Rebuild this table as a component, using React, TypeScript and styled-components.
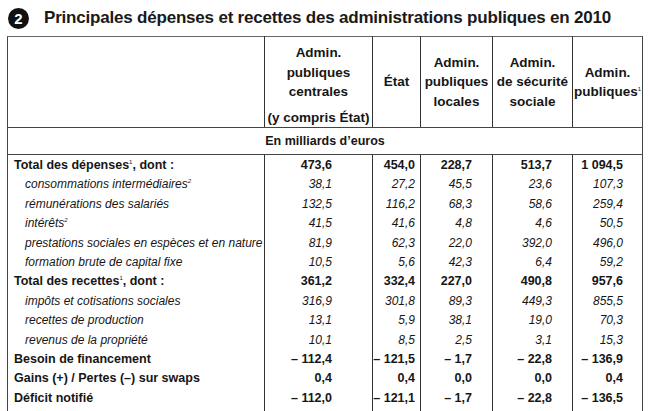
import styled, { createGlobalStyle } from 'styled-components';

const GlobalStyle = createGlobalStyle`
  body {
    margin: 0;
    background: #fff;
    font-family: 'Liberation Sans', Arial, sans-serif;
    color: #161616;
  }
`;

type Kind = 'total' | 'sub';

interface Row {
    label: string;
    sup?: string;
    suffix?: string;
    kind: Kind;
    values: string[];
}

const M = '\u2013\u00a0';

const rows: Row[] = [
    { label: 'Total des dépenses', sup: '1', suffix: ', dont :', kind: 'total', values: ['473,6', '454,0', '228,7', '513,7', '1\u00a0094,5'] },
    { label: 'consommations intermédiaires', sup: '2', kind: 'sub', values: ['38,1', '27,2', '45,5', '23,6', '107,3'] },
    { label: 'rémunérations des salariés', kind: 'sub', values: ['132,5', '116,2', '68,3', '58,6', '259,4'] },
    { label: 'intérêts', sup: '2', kind: 'sub', values: ['41,5', '41,6', '4,8', '4,6', '50,5'] },
    { label: 'prestations sociales en espèces et en nature', kind: 'sub', values: ['81,9', '62,3', '22,0', '392,0', '496,0'] },
    { label: 'formation brute de capital fixe', kind: 'sub', values: ['10,5', '5,6', '42,3', '6,4', '59,2'] },
    { label: 'Total des recettes', sup: '1', suffix: ', dont :', kind: 'total', values: ['361,2', '332,4', '227,0', '490,8', '957,6'] },
    { label: 'impôts et cotisations sociales', kind: 'sub', values: ['316,9', '301,8', '89,3', '449,3', '855,5'] },
    { label: 'recettes de production', kind: 'sub', values: ['13,1', '5,9', '38,1', '19,0', '70,3'] },
    { label: 'revenus de la propriété', kind: 'sub', values: ['10,1', '8,5', '2,5', '3,1', '15,3'] },
    { label: 'Besoin de financement', kind: 'total', values: [M + '112,4', M + '121,5', M + '1,7', M + '22,8', M + '136,9'] },
    { label: 'Gains (+) / Pertes (–) sur swaps', kind: 'total', values: ['0,4', '0,4', '0,0', '0,0', '0,4'] },
    { label: 'Déficit notifié', kind: 'total', values: [M + '112,0', M + '121,1', M + '1,7', M + '22,8', M + '136,5'] },
];

// largeur des colonnes et marge droite des chiffres
const widths = [257, 108, 48, 72, 80, 70];
const pads = [40, 5, 20, 20, 19];

function App() {
    return (
        <>
            <GlobalStyle />
            <Page>
                <TitleRow>
                    <Badge>2</Badge>
                    <Title>Principales dépenses et recettes des administrations publiques en 2010</Title>
                </TitleRow>

                <Table>
                    <colgroup>
                        {widths.map((w, i) => (
                            <Col key={i} w={w} />
                        ))}
                    </colgroup>
                    <thead>
                        <tr>
                            <HeadCell />
                            <HeadCell>
                                <HeadStack>
                                    <span>Admin.</span>
                                    <span>publiques</span>
                                    <span>centrales</span>
                                    <Note>(y compris État)</Note>
                                </HeadStack>
                            </HeadCell>
                            <HeadCell>État</HeadCell>
                            <HeadCell>
                                Admin.
                                <br />
                                publiques
                                <br />
                                locales
                            </HeadCell>
                            <HeadCell>
                                Admin.
                                <br />
                                de sécurité
                                <br />
                                sociale
                            </HeadCell>
                            <HeadCell>
                                Admin.
                                <br />
                                publiques<Sup>1</Sup>
                            </HeadCell>
                        </tr>
                        <tr>
                            <UnitCell colSpan={6}>En milliards d’euros</UnitCell>
                        </tr>
                    </thead>
                    <tbody>
                        {rows.map((r, i) => (
                            <tr key={i}>
                                <Label kind={r.kind} first={i === 0} last={i === rows.length - 1}>
                                    {r.label}
                                    {r.sup && <Sup>{r.sup}</Sup>}
                                    {r.suffix}
                                </Label>
                                {r.values.map((v, j) => (
                                    <Value key={j} kind={r.kind} pr={pads[j]} first={i === 0} last={i === rows.length - 1}>
                                        {v}
                                    </Value>
                                ))}
                            </tr>
                        ))}
                    </tbody>
                </Table>
            </Page>
        </>
    );
}

export default App;

const Page = styled.div`
    width: 650px;
    height: 411px;
    overflow: hidden;
`;

const TitleRow = styled.div`
    display: flex;
    align-items: center;
    height: 36px;
    padding-left: 8px;
    gap: 15px;
`;

const Badge = styled.span`
    display: flex;
    align-items: center;
    justify-content: center;
    width: 21px;
    height: 21px;
    border-radius: 50%;
    background: #111;
    color: #fff;
    font-size: 15px;
    font-weight: bold;
`;

const Title = styled.h1`
    margin: 0;
    font-size: 17px;
    font-weight: bold;
    letter-spacing: -0.2px;
    color: #1a1a1a;
`;

const Table = styled.table`
    margin-left: 7px;
    width: 635px;
    border-collapse: collapse;
    table-layout: fixed;
    border-top: 1px solid #666;
    border-left: 1px solid #444;
    border-right: 1px solid #444;
    border-bottom: 2px solid #333;
`;

const Col = styled.col<{ w: number }>`
    width: ${(props) => props.w}px;
`;

const HeadCell = styled.th`
    height: 88px;
    padding: 0;
    border-left: 1px solid #333;
    border-bottom: 1px solid #444;
    text-align: center;
    vertical-align: middle;
    font-size: 13.5px;
    font-weight: bold;
    line-height: 19.5px;
    white-space: nowrap;

    &:first-child {
        border-left: none;
    }
`;

const HeadStack = styled.div`
    display: flex;
    flex-direction: column;
    align-items: center;
    padding-top: 6px;
`;

const Note = styled.span`
    margin-top: 6px;
`;

const UnitCell = styled.td`
    height: 26px;
    padding: 0;
    border-bottom: 1px solid #444;
    text-align: center;
    font-size: 12.5px;
    font-weight: bold;
`;

interface CellProps {
    kind: Kind;
    first?: boolean;
    last?: boolean;
    pr?: number;
}

const Label = styled.td<CellProps>`
    height: 19.4px;
    padding: ${(p) => (p.first ? 1 : 0)}px 0 ${(p) => (p.last ? 3 : 0)}px ${(p) => (p.kind === 'total' ? 6 : 17)}px;
    font-size: ${(p) => (p.kind === 'total' ? 12.5 : 12)}px;
    font-weight: ${(p) => (p.kind === 'total' ? 'bold' : 'normal')};
    font-style: ${(p) => (p.kind === 'total' ? 'normal' : 'italic')};
    line-height: 19.4px;
    white-space: nowrap;
`;

const Value = styled.td<CellProps>`
    height: 19.4px;
    padding: ${(p) => (p.first ? 1 : 0)}px ${(p) => p.pr}px ${(p) => (p.last ? 3 : 0)}px 0;
    border-left: 1px solid #333;
    text-align: right;
    font-size: ${(p) => (p.kind === 'total' ? 12.5 : 12)}px;
    font-weight: ${(p) => (p.kind === 'total' ? 'bold' : 'normal')};
    font-style: ${(p) => (p.kind === 'total' ? 'normal' : 'italic')};
    line-height: 19.4px;
    white-space: nowrap;
    overflow: visible;
`;

const Sup = styled.sup`
    font-size: 6px;
    font-weight: normal;
    line-height: 0;
    vertical-align: 5px;
`;
